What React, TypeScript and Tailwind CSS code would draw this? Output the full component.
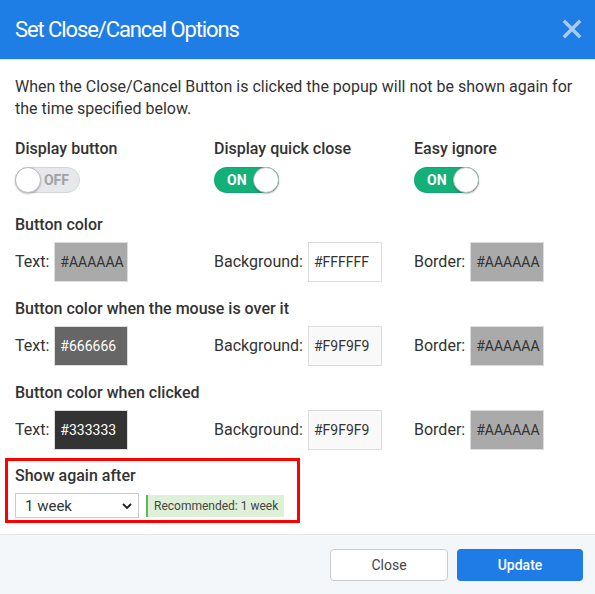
import React from "react";

function Toggle({ on }: { on: boolean }) {
  if (on) {
    return (
      <div className="relative flex h-[26px] w-[65px] items-center rounded-full bg-[#14b07a] shadow-[inset_0_0_0_1px_rgba(0,0,0,0.05)]">
        <span className="pl-[13px] text-[14px] font-bold leading-none text-white">ON</span>
        <span className="absolute right-0 top-0 h-[26px] w-[26px] rounded-full border border-[#bbb] bg-white shadow-[0_1px_2px_rgba(0,0,0,0.25)]" />
      </div>
    );
  }
  return (
    <div className="relative flex h-[26px] w-[65px] items-center justify-end rounded-full border border-[#d4d6d9] bg-[#e6e8eb]">
      <span className="pr-[10px] text-[14px] font-bold leading-none text-[#a0a3a6]">OFF</span>
      <span className="absolute -left-px -top-px h-[26px] w-[26px] rounded-full border border-[#bbb] bg-white shadow-[0_1px_2px_rgba(0,0,0,0.25)]" />
    </div>
  );
}

function Swatch({ bg, fg, value }: { bg: string; fg: string; value: string }) {
  return (
    <div
      className="flex h-[40px] w-[74px] items-center border border-[#dcdcdc] pl-[5px] text-[14px]"
      style={{ backgroundColor: bg, color: fg }}
    >
      {value}
    </div>
  );
}

function ColorRow({
  text,
  background,
  border,
}: {
  text: [string, string];
  background: [string, string];
  border: [string, string];
}) {
  return (
    <div className="grid grid-cols-[199px_200px_1fr] items-center">
      <div className="flex items-center gap-[5px]">
        <span>Text:</span>
        <Swatch bg={text[0]} fg={text[1]} value={text[0].toUpperCase()} />
      </div>
      <div className="flex items-center gap-[5px]">
        <span>Background:</span>
        <Swatch bg={background[0]} fg={background[1]} value={background[0].toUpperCase()} />
      </div>
      <div className="flex items-center gap-[5px]">
        <span>Border:</span>
        <Swatch bg={border[0]} fg={border[1]} value={border[0].toUpperCase()} />
      </div>
    </div>
  );
}

export default function App() {
  return (
    <div
      className="flex h-[594px] w-[595px] flex-col bg-white text-[16px] leading-[22px] text-[#333]"
      style={{ fontFamily: "Roboto, 'Liberation Sans', sans-serif" }}
    >
      <div className="flex h-[60px] items-center justify-between border-b border-[#e3e3e3] bg-[#1f7de6] pl-[15px] pr-[13px]">
        <h1 className="text-[22px] font-normal tracking-[-1.1px] text-white">Set Close/Cancel Options</h1>
        <svg width="20" height="20" viewBox="0 0 20 20" className="mb-[1px]">
          <path d="M3 3 L17 17 M17 3 L3 17" stroke="#a9cbf6" strokeWidth="3.4" strokeLinecap="square" />
        </svg>
      </div>

      <div className="flex-1 px-[15px] pt-[16px]">
        <p>When the Close/Cancel Button is clicked the popup will not be shown again for the time specified below.</p>

        <div className="mt-[18px] grid grid-cols-[199px_200px_1fr]">
          <div>
            <div className="font-medium">Display button</div>
            <div className="mt-[7px]">
              <Toggle on={false} />
            </div>
          </div>
          <div>
            <div className="font-medium">Display quick close</div>
            <div className="mt-[7px]">
              <Toggle on={true} />
            </div>
          </div>
          <div>
            <div className="font-medium">Easy ignore</div>
            <div className="mt-[7px]">
              <Toggle on={true} />
            </div>
          </div>
        </div>

        <div className="mt-[21px] font-medium">Button color</div>
        <div className="mt-[6px]">
          <ColorRow text={["#aaaaaa", "#333"]} background={["#ffffff", "#333"]} border={["#aaaaaa", "#333"]} />
        </div>

        <div className="mt-[16px] font-medium">Button color when the mouse is over it</div>
        <div className="mt-[6px]">
          <ColorRow text={["#666666", "#fff"]} background={["#f9f9f9", "#333"]} border={["#aaaaaa", "#333"]} />
        </div>

        <div className="mt-[16px] font-medium">Button color when clicked</div>
        <div className="mt-[6px]">
          <ColorRow text={["#333333", "#fff"]} background={["#f9f9f9", "#333"]} border={["#aaaaaa", "#333"]} />
        </div>

        <div className="-ml-[10px] mt-[8px] w-[295px] border-[3px] border-[#f00] pb-[2px] pl-[7px] pt-[4px]">
          <div className="font-medium">Show again after</div>
          <div className="mt-[6px] flex items-center gap-[7px]">
            <div className="relative flex h-[25px] w-[124px] items-center border border-[#ccc] bg-white pl-[9px] text-[15px]">
              1 week
              <svg width="10" height="7" viewBox="0 0 10 7" className="absolute right-[6px] top-[9px]">
                <path d="M1 1 L5 5 L9 1" stroke="#222" strokeWidth="1.8" fill="none" />
              </svg>
            </div>
            <div className="flex h-[22px] items-center border-l-2 border-[#5cb85c] bg-[#dff0d8] px-[6px] text-[12px] text-[#444]">
              Recommended: 1 week
            </div>
          </div>
        </div>
      </div>

      <div className="flex h-[60px] items-center justify-end gap-[9px] border-t border-[#e3e3e3] bg-[#f4f7fa] pr-[12px]">
        <button className="h-[32px] w-[118px] rounded-[4px] border border-[#ccc] bg-white text-[14px] text-[#444]">
          Close
        </button>
        <button className="h-[32px] w-[126px] rounded-[4px] bg-[#1f7be6] text-[14px] font-medium text-white">
          Update
        </button>
      </div>
    </div>
  );
}
